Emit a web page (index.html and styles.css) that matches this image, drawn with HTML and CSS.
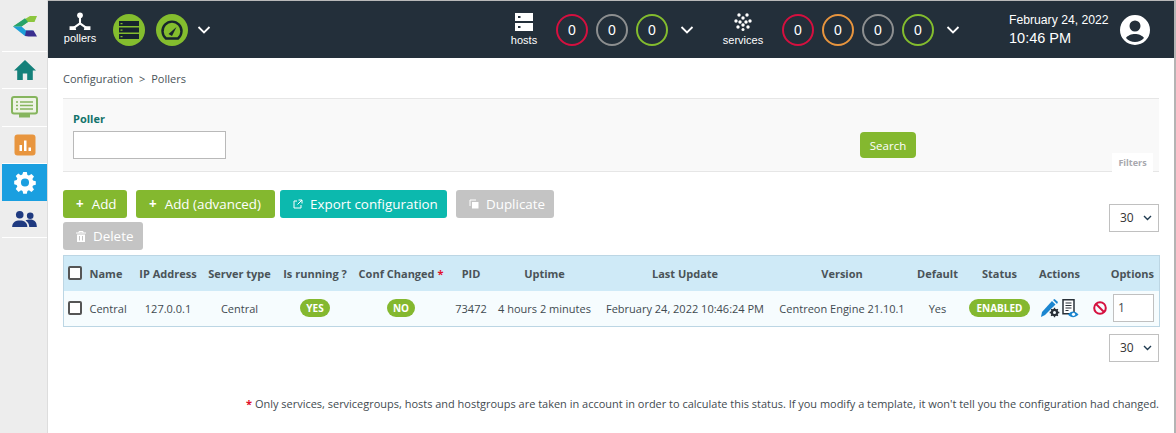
FILE: index.html
```html
<!DOCTYPE html>
<html lang="en">
<head>
<meta charset="utf-8">
<title>Pollers</title>
<link rel="stylesheet" href="styles.css">
</head>
<body>
<div class="app">
  <nav class="side">
    <div class="side-logo">
      <svg width="24" height="21" viewBox="0 0 24 21"><path d="M17 0H24L21.500 6H15L8.500 10.500H0Z" fill="#8cc63f"/><path d="M12 2.200 15 6 8.500 10.500H0Z" fill="#27a36a"/><path d="M0 10.500H8.500L13 14.500H20L12 20Z" fill="#1e9fd8"/><path d="M13 14.500H20.500L24 20.500H15.500L12 20Z" fill="#3a2f8f"/></svg>
    </div>
    <div class="side-item">
      <svg width="24" height="22" viewBox="0 0 24 22"><path d="M12 1 1 11.500h3.200V21h5.600v-6.500h4.400V21h5.600v-9.500H23Z" fill="#14807a"/></svg>
    </div>
    <div class="side-item">
      <svg width="27" height="22" viewBox="0 0 27 22"><rect x="1" y="1" width="25" height="16.500" rx="2" fill="#eef3e6" stroke="#86b55e" stroke-width="2"/><path d="M5 6h2M9 6h13M5 9.500h2M9 9.500h13M5 13h2M9 13h13" stroke="#86b55e" stroke-width="1.600"/><rect x="8" y="18" width="11" height="3.500" fill="#86b55e"/></svg>
    </div>
    <div class="side-item">
      <svg width="22" height="22" viewBox="0 0 22 22"><rect width="21" height="21" x=".5" y=".5" rx="3" fill="#e8953e"/><path d="M5.500 11h2.500v6H5.500ZM10 6.500h2.500V17H10ZM14.500 13.500h2.500V17h-2.500Z" fill="#fff"/></svg>
    </div>
    <div class="side-item side-active">
      <svg width="24" height="24" viewBox="0 0 24 24"><path fill="#fff" fill-rule="evenodd" d="M10 1h4l.7 3.200 1.700.7 2.800-1.800 2.800 2.800-1.800 2.800.7 1.700 3.100.7v4l-3.100.7-.7 1.700 1.800 2.800-2.800 2.800-2.800-1.800-1.700.7-.7 3.100h-4l-.7-3.100-1.700-.7-2.800 1.800L1.700 19.800l1.800-2.800-.7-1.700L0 14.600v-4l2.800-.7.7-1.700-1.800-2.800 2.800-2.800 2.800 1.800 1.700-.7ZM12 8a4.500 4.500 0 1 0 0 9 4.500 4.500 0 0 0 0-9Z" transform="translate(1.200 .2) scale(.9)"/></svg>
    </div>
    <div class="side-item">
      <svg width="25" height="19" viewBox="0 0 26 20"><circle cx="8" cy="5" r="4" fill="#1f3a80"/><circle cx="19" cy="6" r="3.500" fill="#1f3a80"/><path d="M0 18c0-5 3.500-7 8-7s8 2 8 7Z" fill="#1f3a80"/><path d="M14 11c1.500-.8 3-1 5-1 4 0 7 2 7 8h-8c0-3-1.500-5.500-4-7Z" fill="#1f3a80"/></svg>
    </div>
  </nav>
  <div class="main">
    <header class="top">
      <div class="top-group pollers-group">
        <div class="top-labelled">
          <svg width="24" height="19" viewBox="0 0 24 20"><circle cx="12" cy="3.500" r="3" fill="#fff"/><path d="M12 5v7L5 17M12 12l7 5" stroke="#fff" stroke-width="2.200" fill="none"/><path d="M1 15h6l1 4H1ZM17 15h6v4h-7Z" fill="#fff"/></svg>
          <span>pollers</span>
        </div>
        <div class="green-disc">
          <svg width="22" height="18" viewBox="0 0 22 18"><path d="M1 0h20v5H1ZM1 6.500h20v5H1ZM1 13h20v5H1Z" fill="#17242e"/><path d="M3.500 2v1.200M3.500 8.500v1.200M3.500 15v1.200" stroke="#84bd2e" stroke-width="2"/></svg>
        </div>
        <div class="green-disc">
          <svg width="22" height="20" viewBox="0 0 22 20"><path d="M5 18.500h12a9.500 9.500 0 1 0-12 0Z" fill="none" stroke="#17242e" stroke-width="2.400"/><path d="M7.500 14 15.500 7l-4.500 9Z" fill="#17242e"/></svg>
        </div>
        <svg class="chev" width="14" height="8" viewBox="0 0 14 8"><path d="M1.500 1 7 6.500 12.500 1" fill="none" stroke="#fff" stroke-width="1.800"/></svg>
      </div>
      <div class="top-group hosts-group">
        <div class="top-labelled">
          <svg width="18" height="18" viewBox="0 0 18 18"><path fill="#fff" fill-rule="evenodd" d="M0 0h18v8H0ZM0 10h18v8H0ZM3 3v2h2.500V3ZM3 13v2h2.500v-2Z"/></svg>
          <span>hosts</span>
        </div>
        <div class="ring ring-red">0</div>
        <div class="ring ring-grey">0</div>
        <div class="ring ring-green">0</div>
        <svg class="chev" width="14" height="8" viewBox="0 0 14 8"><path d="M1.500 1 7 6.500 12.500 1" fill="none" stroke="#fff" stroke-width="1.800"/></svg>
      </div>
      <div class="top-group services-group">
        <div class="top-labelled">
          <svg width="18" height="18" viewBox="0 0 18 18" fill="#fff"><circle cx="5" cy="2" r="1.700"/><circle cx="13" cy="2" r="1.700"/><circle cx="9" cy="5" r="1.700"/><circle cx="2" cy="8" r="1.700"/><circle cx="16" cy="8" r="1.700"/><circle cx="6" cy="9" r="1.700"/><circle cx="12" cy="9" r="1.700"/><circle cx="9" cy="12" r="1.700"/><circle cx="4" cy="14" r="1.700"/><circle cx="14" cy="14" r="1.700"/><circle cx="9" cy="16.500" r="1.500"/></svg>
          <span>services</span>
        </div>
        <div class="ring ring-red">0</div>
        <div class="ring ring-orange">0</div>
        <div class="ring ring-grey">0</div>
        <div class="ring ring-green">0</div>
        <svg class="chev" width="14" height="8" viewBox="0 0 14 8"><path d="M1.500 1 7 6.500 12.500 1" fill="none" stroke="#fff" stroke-width="1.800"/></svg>
      </div>
      <div class="clock">
        <div class="clock-date">February 24, 2022</div>
        <div class="clock-time">10:46 PM</div>
      </div>
      <svg class="avatar" width="30" height="30" viewBox="0 0 30 30"><path fill="#fff" fill-rule="evenodd" d="M15 0a15 15 0 1 1 0 30 15 15 0 0 1 0-30ZM15 5.500a5.500 5.500 0 1 0 0 11 5.500 5.500 0 0 0 0-11ZM15 19c-3.500 0-7.500 1.500-9 4a12 12 0 0 0 18 0c-1.500-2.500-5.500-4-9-4Z"/></svg>
    </header>
    <main class="content">
      <div class="crumbs">Configuration <span class="crumb-sep">&gt;</span> Pollers</div>
      <form class="filters">
        <label class="filter-label">Poller</label>
        <div class="filter-row">
          <input class="filter-input" type="text">
          <button class="btn-search" type="button">Search</button>
        </div>
        <div class="filters-tab">Filters</div>
      </form>
      <div class="toolbar">
        <div class="actions">
          <button class="btn btn-green btn-add" type="button"><span class="plus">+</span>Add</button>
          <button class="btn btn-green btn-adv" type="button"><span class="plus">+</span>Add (advanced)</button>
          <button class="btn btn-teal" type="button">
            <svg width="10" height="10" viewBox="0 0 10 10"><path d="M4 2H1v7h7V6M5.500 1H9v3.500M9 1 4.500 5.500" fill="none" stroke="#fff" stroke-width="1"/></svg>Export configuration</button>
          <button class="btn btn-grey btn-dup" type="button">
            <svg width="10" height="10" viewBox="0 0 10 10"><path d="M3 3h6.500v6.500H3Z" fill="#fff"/><path d="M1 7V1h6" fill="none" stroke="#fff"/></svg>Duplicate</button>
          <button class="btn btn-grey btn-del" type="button">
            <svg width="10" height="11" viewBox="0 0 10 11"><path d="M0 2h10M3 2V.5h4V2" fill="none" stroke="#fff"/><path d="M1 3.500h8V11H1Z" fill="#fff"/><path d="M3.500 5v4.500M6.500 5v4.500" stroke="#c4c4c4"/></svg>Delete</button>
        </div>
        <div class="pager-select">30<svg width="9" height="6" viewBox="0 0 9 6"><path d="M1 1l3.500 3.500L8 1" fill="none" stroke="#1f3a50" stroke-width="1.400"/></svg></div>
      </div>
      <table class="grid">
        <colgroup>
          <col class="w-check"><col class="w-name"><col class="w-ip"><col class="w-type"><col class="w-run"><col class="w-conf"><col class="w-pid"><col class="w-up"><col class="w-last"><col class="w-ver"><col class="w-def"><col class="w-stat"><col class="w-act"><col class="w-opt">
        </colgroup>
        <thead>
          <tr>
            <th class="c-check"><span class="check"></span></th>
            <th class="c-name">Name</th>
            <th>IP Address</th>
            <th>Server type</th>
            <th>Is running ?</th>
            <th>Conf Changed <span class="star">*</span></th>
            <th>PID</th>
            <th>Uptime</th>
            <th>Last Update</th>
            <th>Version</th>
            <th>Default</th>
            <th>Status</th>
            <th>Actions</th>
            <th class="c-options">Options</th>
          </tr>
        </thead>
        <tbody>
          <tr>
            <td class="c-check"><span class="check"></span></td>
            <td class="c-name">Central</td>
            <td>127.0.0.1</td>
            <td>Central</td>
            <td><span class="badge">YES</span></td>
            <td><span class="badge">NO</span></td>
            <td>73472</td>
            <td>4 hours 2 minutes</td>
            <td>February 24, 2022 10:46:24 PM</td>
            <td>Centreon Engine 21.10.1</td>
            <td>Yes</td>
            <td><span class="badge badge-wide">ENABLED</span></td>
            <td class="c-actions">
              <svg width="20" height="19" viewBox="0 0 20 19"><path d="M1 18l1-5L12 2l3.500 3.500L5 16Z" fill="#1b86d0"/><path d="M13 1l1.500-1L18 3l-1 2Z" fill="#1b86d0"/><circle cx="14.500" cy="13.500" r="5" fill="#f6fcfe"/><circle cx="14.500" cy="13.500" r="3.800" fill="#2a3138"/><path d="M14.500 8.700v9.600M9.700 13.500h9.600M11.100 10.100l6.800 6.800M17.900 10.100l-6.800 6.800" stroke="#2a3138" stroke-width="1.300"/><circle cx="14.500" cy="13.500" r="1.500" fill="#f6fcfe"/></svg>
              <svg width="17" height="19" viewBox="0 0 17 19"><path d="M1 .8h11v14H1Z" fill="#fff" stroke="#2a3138" stroke-width="1.500"/><path d="M3.500 4h6M3.500 6.500h6M3.500 9h6M3.500 11.500h3" stroke="#2a3138" stroke-width="1.200"/><path d="M6 15.500c3-4 7-4 10.500 0-3.500 3.500-7.500 3.500-10.500 0Z" fill="#1b86d0"/><circle cx="11.500" cy="15.300" r="1.600" fill="#fff"/></svg>
            </td>
            <td class="c-options">
              <div class="option-cell">
                <svg width="14" height="14" viewBox="0 0 14 14"><circle cx="7" cy="7" r="5.800" fill="none" stroke="#d5103f" stroke-width="2"/><path d="M3 3l8 8" stroke="#d5103f" stroke-width="2"/></svg>
                <div class="option-input">1</div>
              </div>
            </td>
          </tr>
        </tbody>
      </table>
      <div class="pager-row">
        <div class="pager-select">30<svg width="9" height="6" viewBox="0 0 9 6"><path d="M1 1l3.500 3.500L8 1" fill="none" stroke="#1f3a50" stroke-width="1.400"/></svg></div>
      </div>
      <p class="footnote"><span class="star">*</span> Only services, servicegroups, hosts and hostgroups are taken in account in order to calculate this status. If you modify a template, it won't tell you the configuration had changed.</p>
    </main>
  </div>
</div>
</body>
</html>
```
FILE: styles.css
```css
* { box-sizing: border-box; }
html, body { margin: 0; height: 100%; }
body { background: #fff; font-family: "Open Sans", sans-serif; color: #3f4a50; overflow: hidden; }
.app { display: flex; height: 433px; border-right: 2px solid #b4b4b4; }
.side { width: 48px; flex: none; background: #ededed; padding: 1px 0 0 2px; display: flex; flex-direction: column; border-right: 1px solid #ddd; }
.side-logo { height: 51px; display: flex; align-items: center; justify-content: center; border-bottom: 1px solid #fff; }
.side-item { height: 37.300px; display: flex; align-items: center; justify-content: center; border-bottom: 1px solid #fff; }
.side-active { background: #1a9fe0; border-bottom: 0; }
.main { flex: 1; min-width: 0; display: flex; flex-direction: column; }
.top { height: 58px; background: #232f3a; border-top: 1px solid #b9b9b9; display: flex; align-items: center; color: #fff; font-family: "Liberation Sans", sans-serif; }
.top-group { display: flex; align-items: center; }
.top-labelled { display: flex; flex-direction: column; align-items: center; gap: 3px; font-size: 11px; line-height: 13px; }
.pollers-group { margin-left: 16px; }
.pollers-group .top-labelled { width: 32px; gap: 1px; margin-top: -2px; }
.green-disc { width: 32px; height: 32px; border-radius: 50%; background: #84bd2e; display: flex; align-items: center; justify-content: center; margin-left: 11px; }
.top-labelled + .green-disc { margin-left: 17px; }
.pollers-group .chev { margin-left: 9px; }
.hosts-group { margin-left: 298px; }
.hosts-group .top-labelled { width: 30px; }
.services-group { margin-left: 26px; }
.services-group .top-labelled { width: 46px; }
.ring { width: 32px; height: 32px; border: 2px solid; border-radius: 50%; display: flex; align-items: center; justify-content: center; font-size: 14px; margin-left: 8px; }
.hosts-group .top-labelled + .ring { margin-left: 17px; }
.services-group .top-labelled + .ring { margin-left: 16px; }
.ring-red { border-color: #d5103f; }
.ring-grey { border-color: #8d8f90; }
.ring-green { border-color: #84bd2e; }
.ring-orange { border-color: #e8953e; }
.top-group .ring + .chev { margin-left: 12px; }
.clock { margin-left: 49px; width: 110px; }
.clock-date { font-size: 12.200px; line-height: 16px; }
.clock-time { font-size: 14.500px; line-height: 20px; }
.avatar { margin-left: 1px; }
.content { flex: 1; min-height: 0; padding: 13px 15px 0 15px; display: flex; flex-direction: column; }
.crumbs { font-size: 11px; line-height: 15px; color: #4a5358; height: 27px; }
.crumb-sep { margin: 0 3px; }
.filters { position: relative; height: 74px; background: #f9f9f9; border-top: 1px solid #e6e6e6; border-bottom: 1px solid #e6e6e6; padding: 12px 10px 0 10px; }
.filter-label { display: block; font-size: 11px; font-weight: 700; color: #12736c; line-height: 15px; }
.filter-row { display: flex; align-items: center; margin-top: 5px; }
.filter-input { width: 153px; height: 28px; background: #fff; border: 1px solid #b9b9b9; padding: 0; }
.btn-search { margin-left: 634px; width: 56px; height: 26px; background: #84b82f; color: #fff; border: 0; border-radius: 4px; font: 400 11.500px "Open Sans", sans-serif; padding: 0; }
.filters-tab { position: absolute; right: 6px; bottom: -1px; width: 41px; height: 19px; background: #fff; font-size: 9px; font-weight: 700; color: #a8a8ae; text-align: center; line-height: 19px; }
.toolbar { display: flex; justify-content: space-between; align-items: flex-start; margin-top: 18px; }
.actions { display: flex; flex-wrap: wrap; gap: 4px 9px; width: 500px; }
.btn { height: 28px; border: 0; border-radius: 3px; color: #fff; font: 400 13.400px/28px "Open Sans", sans-serif; padding: 0 0 0 13px; display: inline-flex; align-items: center; }
.btn svg { margin-right: 7px; }
.plus { margin-right: 8px; font-weight: 700; }
.btn-add { width: 64px; }
.btn-adv { width: 139px; }
.btn-teal { width: 167px; margin-left: -4px; background: #0cb9ae; }
.btn-dup { width: 98px; }
.btn-del { width: 80px; }
.btn-green { background: #84b82f; }
.btn-grey { background: #c4c4c4; }
.pager-select { width: 50px; height: 28px; border: 1px solid #c0c0c0; font-size: 12px; line-height: 26px; padding-left: 10px; color: #333; display: flex; align-items: center; gap: 9px; background: #fff; }
.toolbar .pager-select { margin-top: 14px; }
.grid { width: 1096px; table-layout: fixed; margin-top: 5px; border-collapse: collapse; border: 1px solid #bcd6e4; font-size: 11px; color: #3f4a50; }
.w-check { width: 25px; }
.w-name { width: 45px; }
.w-ip { width: 69px; }
.w-type { width: 74px; }
.w-run { width: 77px; }
.w-conf { width: 95px; }
.w-pid { width: 45px; }
.w-up { width: 102px; }
.w-last { width: 179px; }
.w-ver { width: 135px; }
.w-def { width: 56px; }
.w-stat { width: 68px; }
.w-act { width: 52px; }
.w-opt { width: 74px; }
.grid th { height: 35px; background: #cfeaf7; font-weight: 700; padding: 0; white-space: nowrap; text-align: center; color: #4a5358; }
.grid td { height: 36px; background: #f6fcfe; padding: 0; white-space: nowrap; text-align: center; }
.grid .c-check { padding: 0 0 0 4px; }
.grid .c-name { text-align: left; padding-left: 1px; }
.check { display: block; width: 14px; height: 14px; border: 2px solid #555; border-radius: 2px; background: #fff; }
.star { color: #e0112b; font-weight: 700; }
.badge { display: inline-block; height: 18px; line-height: 18px; border-radius: 9px; background: #84b82f; color: #fff; font-weight: 700; font-size: 10px; padding: 0 6px; }
.badge-wide { padding: 0 7px; }
.c-actions svg { vertical-align: middle; }
.grid .c-options { text-align: right; padding-right: 5px; }
.option-cell { display: flex; align-items: center; justify-content: flex-end; gap: 6px; }
.option-input { width: 41px; height: 28px; border: 1px solid #c0c0c0; background: #fff; text-align: left; padding-left: 4px; line-height: 26px; font-size: 12px; }
.pager-row { display: flex; justify-content: flex-end; margin-top: 7px; }
.footnote { margin: 35px 0 0; font-size: 10.970px; line-height: 14px; text-align: right; color: #3f4a50; }
```
